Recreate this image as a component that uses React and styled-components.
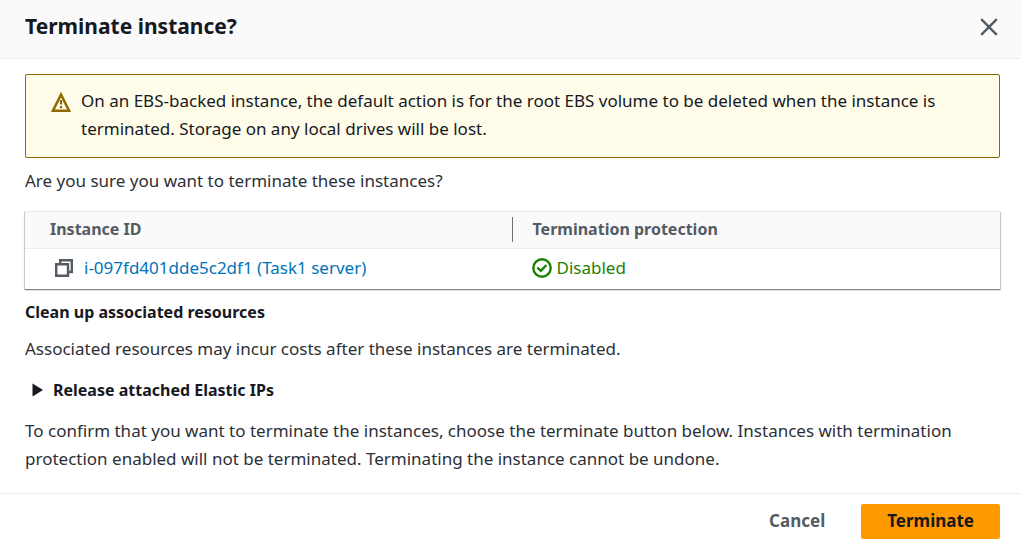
import React from "react";
import styled, { createGlobalStyle } from "styled-components";

const GlobalStyle = createGlobalStyle`
  *, *::before, *::after { box-sizing: border-box; }
  body {
    margin: 0;
    background: #ffffff;
    color: #16191f;
    font-family: "Noto Sans", "Open Sans", sans-serif;
    font-size: 17px;
    line-height: 28px;
  }
  button { font: inherit; margin: 0; cursor: pointer; }
  h2, h3, p { margin: 0; }
`;

const Dialog = styled.div`
  display: flex;
  flex-direction: column;
`;

const Header = styled.header`
  display: flex;
  align-items: center;
  justify-content: space-between;
  padding: 12px 20px 18px 25px;
  background: #fafafa;
  border-bottom: 1px solid #eaeded;
`;

const Title = styled.h2`
  font-size: 21px;
  line-height: 28px;
  font-weight: 700;
`;

const CloseButton = styled.button`
  display: flex;
  padding: 5px 3px 3px;
  border: 0;
  background: none;
  color: #545b64;
`;

const Body = styled.div`
  display: flex;
  flex-direction: column;
  padding: 15px 21px 20px 25px;
`;

const Alert = styled.div`
  display: flex;
  gap: 10px;
  padding: 12px 48px 14px 25px;
  background: #fffce9;
  border: 1px solid #906806;
  border-radius: 2px;
`;

const AlertIcon = styled.svg`
  flex: none;
  margin-top: 5px;
`;

const Text = styled.p`
  margin-top: ${(p) => p.$gap}px;
  color: #2c3036;
`;

const Table = styled.table`
  width: 100%;
  margin-top: 16px;
  border-collapse: separate;
  border-spacing: 0;
  table-layout: fixed;
  border-top: 1px solid #eaeded;
  box-shadow: 0 1px 1px 0 #7d858d, 1px 1px 1px 0 #d5dbdb, -1px 1px 1px 0 #d5dbdb;
`;

const HeadCell = styled.th`
  padding: 3px 0 5px ${(p) => p.$inset}px;
  background: #fafafa;
  border-bottom: 1px solid #eaeded;
  color: #545b64;
  font-size: 16px;
  font-weight: 700;
  text-align: left;
  position: relative;

  &:not(:first-child)::before {
    content: "";
    position: absolute;
    top: 5px;
    bottom: 6px;
    left: -1px;
    border-left: 1px solid #687078;
  }
`;

const Cell = styled.td`
  padding: 5px 0 7px ${(p) => p.$inset}px;
`;

const CellContent = styled.div`
  display: flex;
  align-items: center;
  gap: ${(p) => p.$gap}px;
  color: #1d8102;
`;

const CopyButton = styled.button`
  display: flex;
  padding: 0;
  border: 0;
  background: none;
  color: #545b64;
`;

const InstanceLink = styled.a`
  color: #0073bb;
  text-decoration: none;
`;

const SectionTitle = styled.h3`
  margin-top: 9px;
  font-size: 16px;
  line-height: 28px;
  font-weight: 700;
`;

const ExpandButton = styled.button`
  display: flex;
  align-items: center;
  align-self: flex-start;
  gap: 10px;
  margin-top: 13px;
  padding: 0 0 0 7px;
  border: 0;
  background: none;
  color: #16191f;
  font-size: 16px;
  font-weight: 700;
`;

const Footer = styled.footer`
  display: flex;
  justify-content: flex-end;
  gap: 10px;
  padding: 10px 21px 9px;
  border-top: 1px solid #eaeded;
`;

const Button = styled.button`
  height: 35px;
  padding: 0 26px 2px;
  border: 0;
  border-radius: 2px;
  font-weight: 700;
  background: ${(p) => (p.$primary ? "#ff9900" : "transparent")};
  color: ${(p) => (p.$primary ? "#16191f" : "#545b64")};
`;

export default function App() {
  return (
    <>
      <GlobalStyle />
      <Dialog role="dialog" aria-labelledby="dialog-title">
        <Header>
          <Title id="dialog-title">Terminate instance?</Title>
          <CloseButton aria-label="Close">
            <svg width="18" height="18" viewBox="0 0 18 18" fill="none" stroke="currentColor" strokeWidth="2.4">
              <path d="M1.2 1.2 16.8 16.8M16.8 1.2 1.2 16.8" />
            </svg>
          </CloseButton>
        </Header>
        <Body>
          <Alert role="alert">
            <AlertIcon width="20" height="20" viewBox="0 0 20 20" fill="none" stroke="#906806" strokeWidth="2.5" aria-hidden="true">
              <path d="M10 2.6 18.1 18.7H1.9Z" />
              <path d="M10 8v4.6M10 14v2.2" strokeWidth="2.2" />
            </AlertIcon>
            <span>
              On an EBS-backed instance, the default action is for the root EBS volume to be deleted when the
              instance is terminated. Storage on any local drives will be lost.
            </span>
          </Alert>
          <Text $gap={9}>Are you sure you want to terminate these instances?</Text>
          <Table>
            <thead>
              <tr>
                <HeadCell $inset={25} scope="col">Instance ID</HeadCell>
                <HeadCell $inset={20} scope="col">Termination protection</HeadCell>
              </tr>
            </thead>
            <tbody>
              <tr>
                <Cell $inset={30}>
                  <CellContent $gap={11}>
                    <CopyButton aria-label="Copy instance ID">
                      <svg width="18" height="18" viewBox="0 0 18 18" fill="none" stroke="currentColor" strokeWidth="2.4">
                        <path d="M1.2 5.2H13V16.8H1.2Z" />
                        <path d="M5.2 5V1.2H16.8V13H13" />
                      </svg>
                    </CopyButton>
                    <InstanceLink href="#instance">i-097fd401dde5c2df1 (Task1 server)</InstanceLink>
                  </CellContent>
                </Cell>
                <Cell $inset={19}>
                  <CellContent $gap={5}>
                    <svg width="20" height="20" viewBox="0 0 20 20" fill="none" stroke="currentColor" strokeWidth="2.4" aria-hidden="true">
                      <circle cx="10" cy="10" r="8.7" />
                      <path d="m5.4 9.6 3.4 3.2 5.6-5.6" />
                    </svg>
                    <span>Disabled</span>
                  </CellContent>
                </Cell>
              </tr>
            </tbody>
          </Table>
          <SectionTitle>Clean up associated resources</SectionTitle>
          <Text $gap={9}>Associated resources may incur costs after these instances are terminated.</Text>
          <ExpandButton aria-expanded="false">
            <svg width="11" height="14" viewBox="0 0 11 14" fill="currentColor" aria-hidden="true">
              <path d="M0.5 0.5 11 7 0.5 13.5Z" />
            </svg>
            Release attached Elastic IPs
          </ExpandButton>
          <Text $gap={13}>
            To confirm that you want to terminate the instances, choose the terminate button below. Instances with
            termination protection enabled will not be terminated. Terminating the instance cannot be undone.
          </Text>
        </Body>
        <Footer>
          <Button>Cancel</Button>
          <Button $primary>Terminate</Button>
        </Footer>
      </Dialog>
    </>
  );
}
